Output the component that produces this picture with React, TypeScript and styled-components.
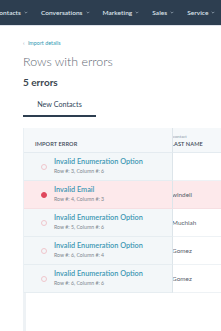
import React from 'react'
import styled, { createGlobalStyle } from 'styled-components'

interface ErrorRow {
  id: number
  title: string
  location: string
  lastName: string
  active?: boolean
}

const ROWS: ErrorRow[] = [
  { id: 1, title: 'Invalid Enumeration Option', location: 'Row #: 3, Column #: 6', lastName: '' },
  { id: 2, title: 'Invalid Email', location: 'Row #: 4, Column #: 3', lastName: 'windell', active: true },
  { id: 3, title: 'Invalid Enumeration Option', location: 'Row #: 5, Column #: 6', lastName: 'Muchiah' },
  { id: 4, title: 'Invalid Enumeration Option', location: 'Row #: 6, Column #: 4', lastName: 'Gomez' },
  { id: 5, title: 'Invalid Enumeration Option', location: 'Row #: 6, Column #: 6', lastName: 'Gomez' },
]

const NAV_ITEMS = ['Contacts', 'Conversations', 'Marketing', 'Sales', 'Service']

const App: React.FC = () => {
  return (
    <>
      <GlobalStyle />
      <Page>
        <NavBar>
          {NAV_ITEMS.map((item) => (
            <NavItem key={item}>
              {item}
              <Caret viewBox='0 0 6 4'>
                <path d='M1 1 L3 3 L5 1' fill='none' stroke='currentColor' strokeWidth='0.9' />
              </Caret>
            </NavItem>
          ))}
        </NavBar>

        <Content>
          <BackLink>
            <span>‹</span> Import details
          </BackLink>
          <Title>Rows with errors</Title>
          <Count>5 errors</Count>

          <Tabs>
            <Tab $active>New Contacts</Tab>
          </Tabs>

          <Table>
            <HeadCell $sticky>
              <HeadLabel>IMPORT ERROR</HeadLabel>
            </HeadCell>
            <HeadCell>
              <HeadGroup>contact</HeadGroup>
              <HeadLabel $clipped>LAST NAME</HeadLabel>
            </HeadCell>

            {ROWS.map((row) => (
              <React.Fragment key={row.id}>
                <ErrorCell $active={row.active}>
                  <Dot $active={row.active} />
                  <ErrorText>
                    <ErrorTitle>{row.title}</ErrorTitle>
                    <ErrorLocation>{row.location}</ErrorLocation>
                  </ErrorText>
                </ErrorCell>
                <ValueCell $active={row.active}>
                  <ValueText>{row.lastName}</ValueText>
                </ValueCell>
              </React.Fragment>
            ))}
          </Table>
          <TableTail />
        </Content>
      </Page>
    </>
  )
}

export default App

const GlobalStyle = createGlobalStyle`
  html, body {
    margin: 0;
    padding: 0;
    background: #ffffff;
    overflow: hidden;
  }
  body {
    font-family: Lato, 'Open Sans', Arial, sans-serif;
    color: #33475b;
  }
`

const Page = styled.div`
  width: 221px;
  height: 331px;
  overflow: hidden;
  display: flex;
  flex-direction: column;
`

const NavBar = styled.nav`
  height: 25px;
  flex-shrink: 0;
  background: #2d3e50;
  display: flex;
  align-items: center;
  gap: 13px;
  margin-left: -5px;
  border-bottom: 1px solid #dfe3eb;
  white-space: nowrap;
`

const NavItem = styled.span`
  display: flex;
  align-items: center;
  gap: 3px;
  font-size: 6.5px;
  font-weight: 600;
  color: #dde5ec;
  letter-spacing: 0.05px;
`

const Caret = styled.svg`
  width: 4px;
  height: 3px;
  color: #b9c6d3;
`

const Content = styled.main`
  flex: 1;
  display: flex;
  flex-direction: column;
  padding-left: 23px;
`

const BackLink = styled.div`
  margin-top: 14px;
  font-size: 5.4px;
  color: #2f99b3;
  height: 6px;
  line-height: 6px;

  span {
    color: #7c98b6;
    margin-right: 2px;
  }
`

const Title = styled.h1`
  margin: 8px 0 0;
  font-size: 12.4px;
  font-weight: 300;
  color: #5f6a75;
  line-height: 16px;
`

const Count = styled.div`
  margin-top: 6px;
  font-size: 10px;
  font-weight: 700;
  color: #3c4650;
  line-height: 12px;
`

const Tabs = styled.div`
  margin-top: 10px;
  display: flex;
`

const Tab = styled.div<{ $active?: boolean }>`
  width: 73px;
  height: 17px;
  text-align: center;
  font-size: 7.2px;
  color: #33475b;
  line-height: 14px;
  border-bottom: 2px solid ${(p) => (p.$active ? '#2d3e50' : 'transparent')};
`

const Table = styled.div`
  margin-top: 11px;
  display: grid;
  grid-template-columns: 149px 1fr;
  grid-auto-rows: 28px;
  grid-template-rows: 25px;
  border-left: 1px solid #eaf0f4;
`

const HeadCell = styled.div<{ $sticky?: boolean }>`
  background: #f5f8fa;
  border-bottom: 1px solid #e4ebf0;
  border-right: ${(p) => (p.$sticky ? '1px solid #dde5ea' : 'none')};
  display: flex;
  flex-direction: column;
  justify-content: flex-end;
  padding: 0 0 4px ${(p) => (p.$sticky ? '11px' : '0')};
  overflow: hidden;
`

const HeadGroup = styled.div`
  font-size: 4.2px;
  color: #8a9aaa;
  line-height: 5px;
  margin-bottom: 1px;
`

const HeadLabel = styled.div<{ $clipped?: boolean }>`
  font-size: 5.6px;
  font-weight: 600;
  color: #3b4856;
  letter-spacing: 0.1px;
  line-height: 8px;
  white-space: nowrap;
  margin-left: ${(p) => (p.$clipped ? '-2px' : '0')};
`

const ErrorCell = styled.div<{ $active?: boolean }>`
  background: ${(p) => (p.$active ? '#fde9eb' : '#f3f7f9')};
  border-right: 1px solid #dde5ea;
  border-bottom: 1px solid ${(p) => (p.$active ? '#f6dfe2' : '#e6edf1')};
  display: flex;
  align-items: center;
  padding-left: 17px;
  gap: 7px;
`

const Dot = styled.span<{ $active?: boolean }>`
  width: 6px;
  height: 6px;
  border-radius: 50%;
  box-sizing: border-box;
  flex-shrink: 0;
  background: ${(p) => (p.$active ? '#e0475c' : 'transparent')};
  border: 1px solid ${(p) => (p.$active ? '#e0475c' : '#f0c6cc')};
`

const ErrorText = styled.div`
  display: flex;
  flex-direction: column;
  gap: 2px;
  margin-top: -1px;
`

const ErrorTitle = styled.div`
  font-size: 7.3px;
  font-weight: 600;
  color: #3d97b4;
  line-height: 8px;
  white-space: nowrap;
`

const ErrorLocation = styled.div`
  font-size: 5.2px;
  color: #7d8790;
  line-height: 6px;
  white-space: nowrap;
`

const ValueCell = styled.div<{ $active?: boolean }>`
  background: ${(p) => (p.$active ? '#fde9eb' : '#ffffff')};
  border-bottom: 1px solid ${(p) => (p.$active ? '#f6dfe2' : '#eef2f5')};
  display: flex;
  align-items: center;
  overflow: hidden;
`

const ValueText = styled.span`
  font-size: 6.4px;
  color: #56606a;
  white-space: nowrap;
  margin-left: -1px;
`

const TableTail = styled.div`
  flex: 1;
  border-left: 3px solid #eef2f5;
`
